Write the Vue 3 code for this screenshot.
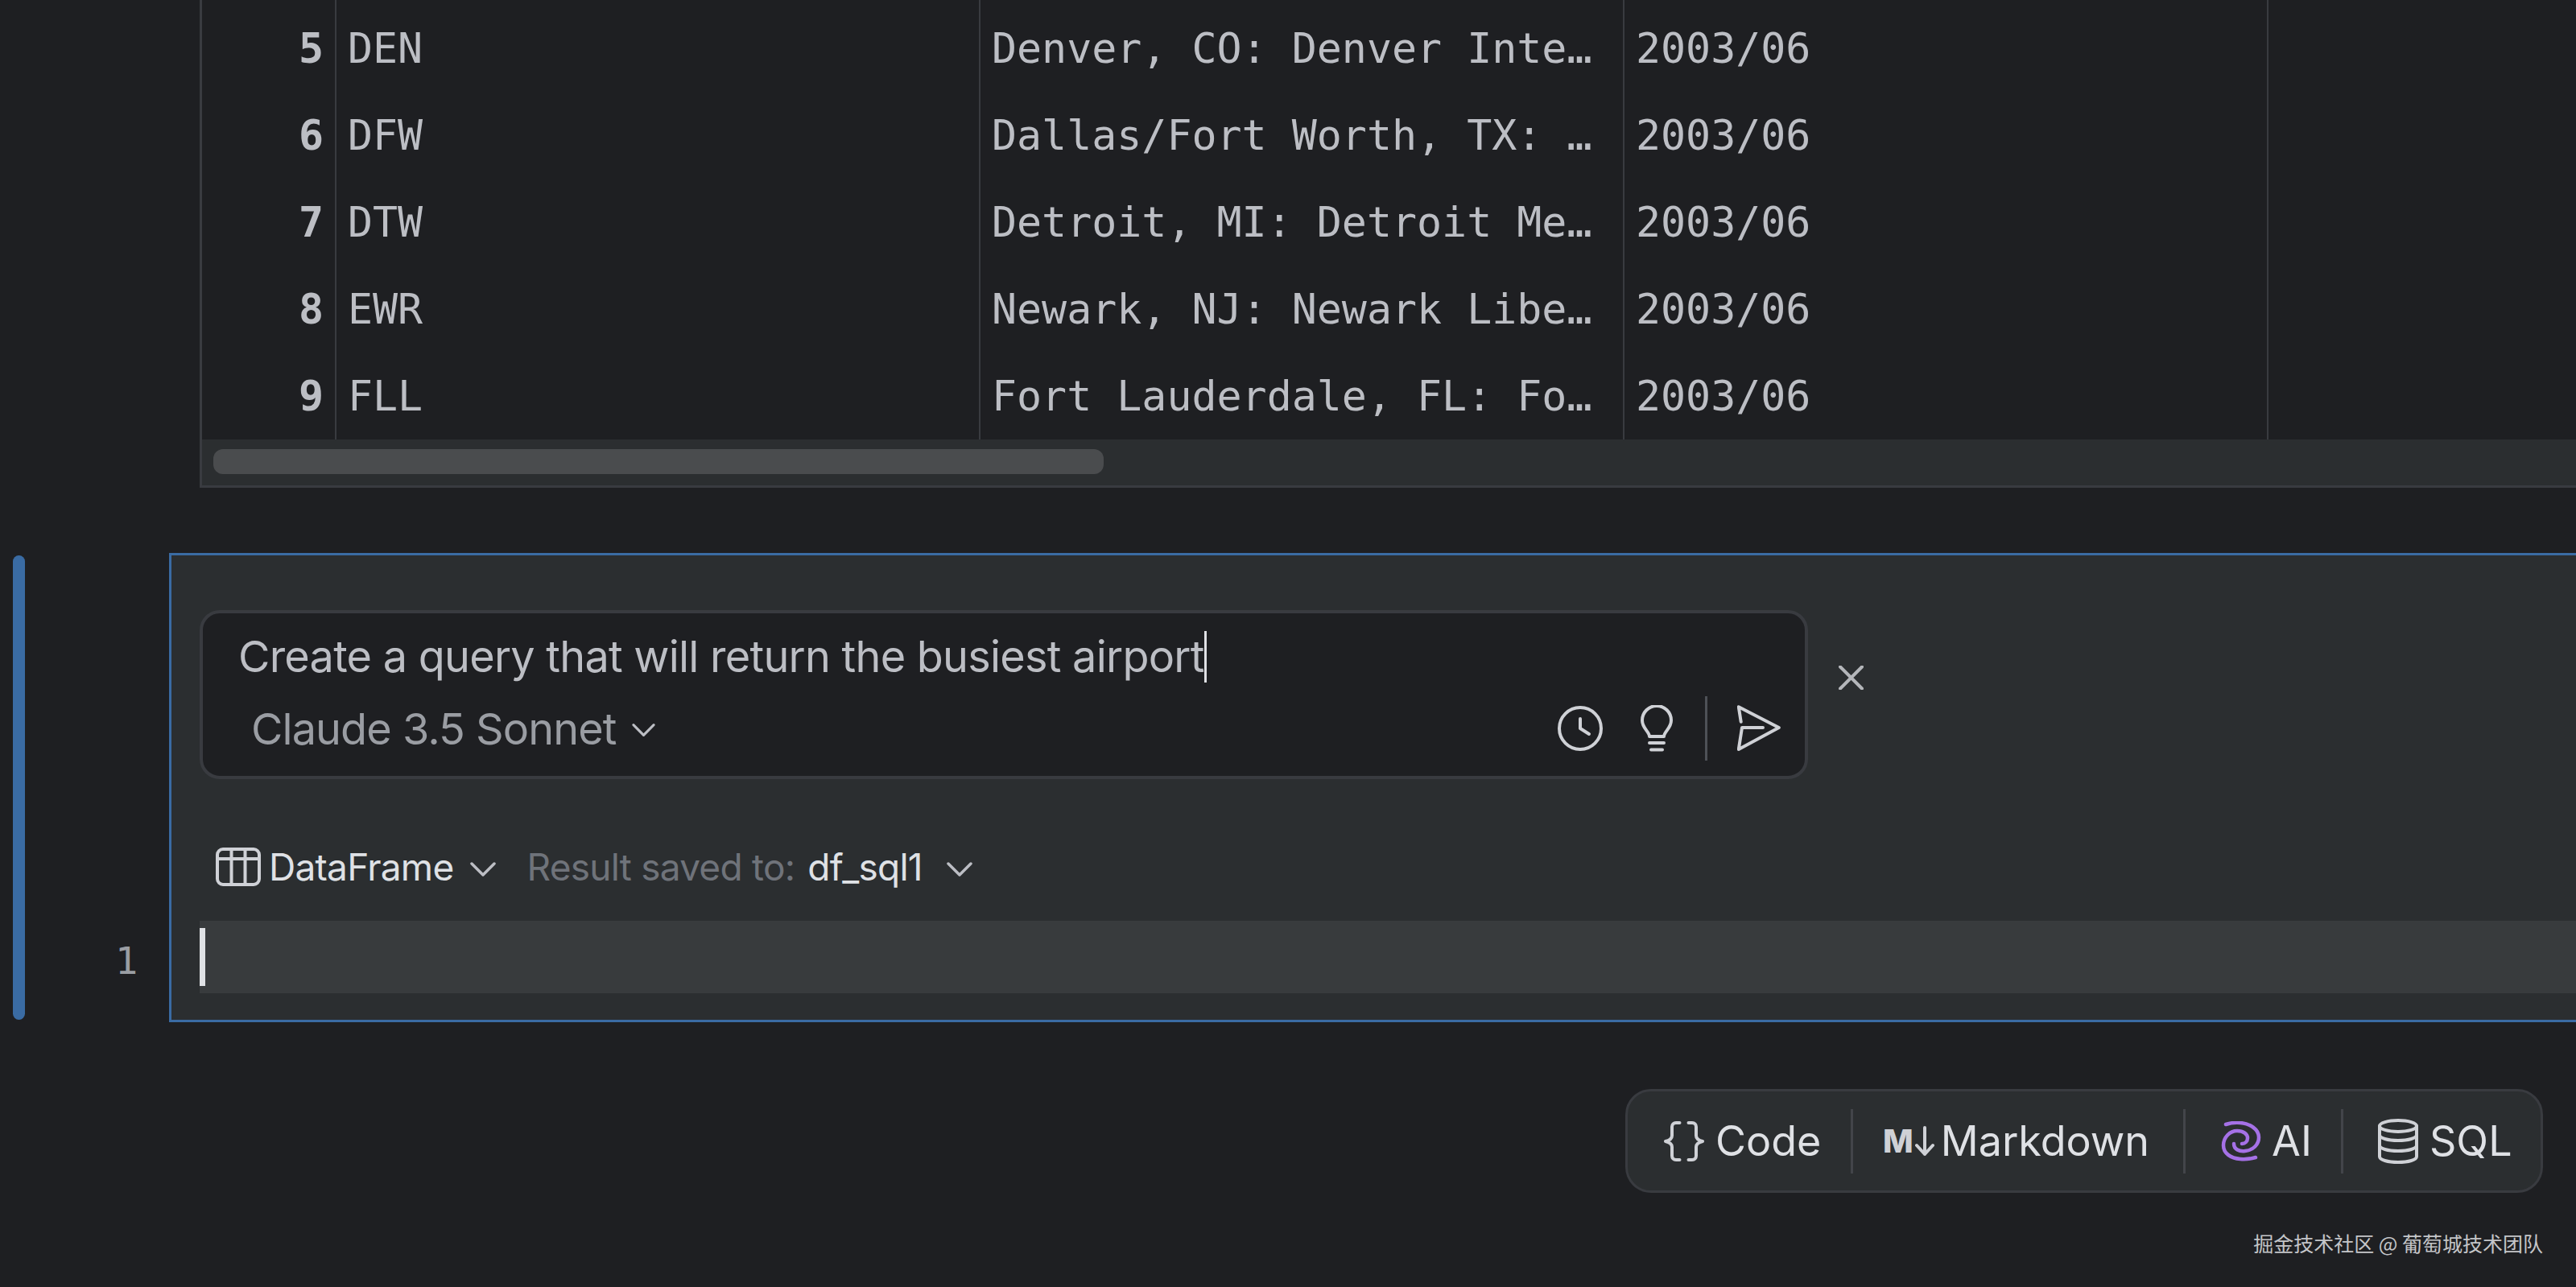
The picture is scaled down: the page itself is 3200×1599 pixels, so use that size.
<script setup>
const rows = [
  { n: 5, code: 'DEN', name: 'Denver, CO: Denver Inte…', date: '2003/06' },
  { n: 6, code: 'DFW', name: 'Dallas/Fort Worth, TX: …', date: '2003/06' },
  { n: 7, code: 'DTW', name: 'Detroit, MI: Detroit Me…', date: '2003/06' },
  { n: 8, code: 'EWR', name: 'Newark, NJ: Newark Libe…', date: '2003/06' },
  { n: 9, code: 'FLL', name: 'Fort Lauderdale, FL: Fo…', date: '2003/06' }
]
</script>

<template>
  <div class="page">
    <section class="table-wrap">
      <div class="table-body">
        <div class="row spacer">
          <div class="c num"></div><div class="c code"></div><div class="c name"></div><div class="c date"></div>
        </div>
        <div v-for="r in rows" :key="r.n" class="row">
          <div class="c num">{{ r.n }}</div>
          <div class="c code">{{ r.code }}</div>
          <div class="c name">{{ r.name }}</div>
          <div class="c date">{{ r.date }}</div>
        </div>
      </div>
      <div class="hscroll"><div class="thumb"></div></div>
    </section>

    <section class="cell-row">
      <div class="gutter">
        <div class="active-bar"></div>
        <div class="line-no">1</div>
      </div>
      <div class="cell">
        <div class="prompt-row">
          <div class="prompt">
            <div class="prompt-text">Create a query that will return the busiest airport<span class="caret"></span></div>
            <div class="prompt-foot">
              <span class="model">Claude 3.5 Sonnet</span>
              <svg class="chev-model" viewBox="0 0 32 20" fill="none"><path d="M2 3l14 14L30 3" /></svg>
              <div class="prompt-actions">
                <svg class="i-clock" viewBox="0 0 56 56" fill="none">
                  <circle cx="28" cy="28" r="26" />
                  <path d="M28 16v12l11 7" />
                </svg>
                <svg class="i-bulb" viewBox="0 0 40 58" fill="none">
                  <path d="M11 39c0-6-9-10-9-20a18 18 0 0 1 36 0c0 10-9 14-9 20z" />
                  <path d="M11 47h18M13 55.500h14" />
                </svg>
                <div class="v-sep"></div>
                <svg class="i-send" viewBox="0 0 54 58" fill="none">
                  <path d="M4.700 20.700L1.800 2.300 51.800 28 1.800 55 6 28h26" />
                </svg>
              </div>
            </div>
          </div>
          <svg class="i-close" viewBox="0 0 31 30" fill="none"><path d="M2 1.500l27 27M29 1.500l-27 27" /></svg>
        </div>

        <div class="result-row">
          <svg class="i-table" viewBox="0 0 56 48" fill="none">
            <rect x="2" y="2" width="52" height="44" rx="7" />
            <path d="M2 14h52M19.500 2v44M36.500 2v44" />
          </svg>
          <span class="df">DataFrame</span>
          <svg class="chev" viewBox="0 0 32 20" fill="none"><path d="M2 3l14 14L30 3" /></svg>
          <span class="muted">Result saved to:</span>
          <span class="var">df_sql1</span>
          <svg class="chev chev-var" viewBox="0 0 32 20" fill="none"><path d="M2 3l14 14L30 3" /></svg>
        </div>

        <div class="editor-line"><span class="editor-caret"></span></div>
      </div>
    </section>

    <nav class="add-bar">
      <div class="add-item item-code">
        <svg class="i-code" viewBox="0 0 50 50" fill="none">
          <path d="M19.500 2H15c-3 0-5 2-5 5v11c0 4-4 6-8 7 4 1 8 3 8 7v11c0 3 2 5 5 5h4.500" />
          <path d="M30.500 2H35c3 0 5 2 5 5v11c0 4 4 6 8 7-4 1-8 3-8 7v11c0 3-2 5-5 5h-4.500" />
        </svg>
        <span>Code</span>
      </div>
      <div class="add-sep"></div>
      <div class="add-item item-md">
        <b class="md-m">M</b>
        <svg class="i-down" viewBox="0 0 24 38" fill="none"><path d="M12 2v33M2 24l10 11 10-11" /></svg>
        <span>Markdown</span>
      </div>
      <div class="add-sep"></div>
      <div class="add-item item-ai">
        <svg class="i-ai" viewBox="0 0 50 50" fill="none">
          <path d="M6 4C12 2 18 1.500 24 2C36 3 47 10 47 20C47 29 40 36 30 37C23 38 16 35 16 28" />
          <path d="M43 45C36 47 30 47.500 24 47C12 46 3 40 3 30C3 20 11 12 20 12C28 12 33 16 33 21C33 25 30 28 26 28" />
        </svg>
        <span>AI</span>
      </div>
      <div class="add-sep"></div>
      <div class="add-item item-sql">
        <svg class="i-db" viewBox="0 0 50 56" fill="none">
          <ellipse cx="25" cy="9" rx="23" ry="7" />
          <path d="M2 9v38c0 4 10 7 23 7s23-3 23-7V9" />
          <path d="M2 20c0 4 10 7 23 7s23-3 23-7M2 33c0 4 10 7 23 7s23-3 23-7" />
        </svg>
        <span>SQL</span>
      </div>
    </nav>

    <div class="watermark">掘金技术社区 @ 葡萄城技术团队</div>
  </div>
</template>

<style>
html, body { margin: 0; background: #1e1f22; }
</style>

<style scoped>
.page {
  width: 3200px;
  height: 1599px;
  overflow: hidden;
  background: #1e1f22;
  color: #dfe1e5;
  font-family: Inter, "Noto Sans", sans-serif;
  display: flex;
  flex-direction: column;
}

/* table */
.table-wrap {
  margin-left: 248px;
  height: 606px;
  flex: none;
  box-sizing: border-box;
  border-left: 3px solid #393b40;
  border-bottom: 3px solid #393b40;
  display: flex;
  flex-direction: column;
}
.table-body {
  height: 546px;
  flex: none;
  overflow: hidden;
  display: flex;
  flex-direction: column;
  justify-content: flex-end;
}
.row {
  height: 108px;
  flex: none;
  display: flex;
  font-family: "DejaVu Sans Mono", "Liberation Mono", monospace;
  font-size: 51.600px;
  color: #bcbec4;
  line-height: 109px;
}
.c {
  flex: none;
  box-sizing: border-box;
  border-right: 2px solid #393b40;
  white-space: nowrap;
  overflow: hidden;
}
.num { width: 167px; text-align: right; padding-right: 14px; font-weight: 700; }
.code { width: 800px; padding-left: 14px; }
.name { width: 800px; padding-left: 14px; }
.date { width: 800px; padding-left: 14px; }
.hscroll {
  flex: 1;
  background: #2b2e30;
  display: flex;
  align-items: center;
  padding-left: 14px;
  padding-bottom: 2px;
}
.thumb { width: 1106px; height: 31px; border-radius: 12px; background: #4a4c4e; }

/* cell */
.cell-row {
  margin-top: 81px;
  height: 583px;
  flex: none;
  display: flex;
}
.gutter {
  width: 210px;
  flex: none;
  display: flex;
}
.active-bar {
  margin: 3px 0 3px 16px;
  width: 15px;
  border-radius: 8px;
  background: #3a6ba3;
}
.line-no {
  align-self: flex-end;
  margin: 0 0 46px 112px;
  font-family: "DejaVu Sans Mono", monospace;
  font-size: 47px;
  line-height: 60px;
  color: #9a9da3;
}
.cell {
  flex: 1;
  min-width: 0;
  box-sizing: border-box;
  background: #2b2e30;
  border: 3px solid #3a6ba3;
  border-right: 0;
  padding-top: 68px;
}
.prompt-row {
  display: flex;
  align-items: flex-start;
  margin-left: 35px;
}
.prompt {
  width: 1998px;
  height: 210px;
  flex: none;
  box-sizing: border-box;
  background: #1e1f22;
  border: 4px solid #393b40;
  border-radius: 25px;
  padding: 23px 0 0 44px;
}
.prompt-text {
  display: flex;
  align-items: center;
  height: 62px;
  font-size: 54px;
  line-height: 62px;
  letter-spacing: -0.760px;
  color: #bcbec4;
  white-space: nowrap;
}
.caret { width: 3px; height: 64px; background: #dfe1e5; flex: none; }
.prompt-foot {
  display: flex;
  align-items: center;
  height: 76px;
  margin-top: 20px;
  margin-left: 16px;
}
.model { font-size: 54px; letter-spacing: -0.940px; color: #9a9da3; }
.chev-model { width: 31px; height: 18px; margin: 4px 0 0 19px; }
.chev-model path, .chev path {
  stroke: #bcbec4;
  stroke-width: 3.500;
}
.prompt-actions {
  margin-left: auto;
  display: flex;
  align-items: center;
  padding-right: 30px;
}
svg path, svg circle, svg rect, svg ellipse {
  stroke-linecap: round;
  stroke-linejoin: round;
}
.i-clock { width: 56px; height: 56px; }
.i-clock circle, .i-clock path,
.i-bulb path, .i-send path,
.i-table rect, .i-table path,
.i-code path, .i-down path, .i-db ellipse, .i-db path {
  stroke: #cfd1d6;
  stroke-width: 4;
}
.i-close path { stroke: #b4b6ba; stroke-width: 4; }
.i-bulb { width: 40px; height: 58px; margin-left: 47px; }
.v-sep { width: 3px; height: 80px; background: #4e5157; margin-left: 40px; }
.i-send { width: 54px; height: 58px; margin-left: 37px; }
.i-close { width: 31px; height: 30px; margin: 69px 0 0 38px; }

.result-row {
  display: flex;
  align-items: center;
  margin: 84px 0 0 55px;
  height: 50px;
  font-size: 46px;
  letter-spacing: -0.750px;
}
.i-table { width: 56px; height: 48px; }
.df { margin-left: 10px; color: #dfe1e5; }
.chev { width: 32px; height: 20px; margin: 6px 0 0 21px; }
.muted { margin-left: 38px; color: #6f737a; }
.var { margin-left: 16px; color: #dfe1e5; }
.chev-var { margin-left: 30px; }
.editor-line {
  margin: 42px 0 0 35px;
  height: 90px;
  background: #383b3d;
  display: flex;
  align-items: center;
}
.editor-caret { width: 7px; height: 72px; background: #dfe1e5; }

/* add-cell bar */
.add-bar {
  margin: 83px 41px 0 auto;
  box-sizing: border-box;
  width: 1140px;
  height: 129px;
  flex: none;
  display: flex;
  align-items: center;
  background: #2b2e30;
  border: 3px solid #393b40;
  border-radius: 32px;
  font-size: 52px;
  color: #dfe1e5;
}
.add-item { display: flex; align-items: center; flex: none; box-sizing: border-box; }
.add-sep { width: 3px; height: 80px; background: #43454a; flex: none; }
.item-code { width: 277px; padding-left: 45px; }
.i-code { width: 50px; height: 50px; margin-right: 14px; }
.item-md { width: 410px; padding-left: 37px; }
.md-m { font-size: 40px; font-weight: 800; color: #cfd1d6; line-height: 1; }
.i-down { width: 24px; height: 38px; margin: 0 8px 0 2px; }
.item-ai { width: 193px; padding-left: 44px; }
.i-ai { width: 50px; height: 50px; margin-right: 13px; }
.i-ai path { stroke: #a571e6; stroke-width: 4.500; }
.item-sql { padding-left: 43px; }
.i-db { width: 50px; height: 56px; margin-right: 14px; }

.watermark {
  margin: 47px 41px 0 auto;
  font-family: "Noto Sans CJK SC", Inter, sans-serif;
  font-size: 25px;
  line-height: 30px;
  color: #c4c5c8;
  white-space: nowrap;
}
</style>
